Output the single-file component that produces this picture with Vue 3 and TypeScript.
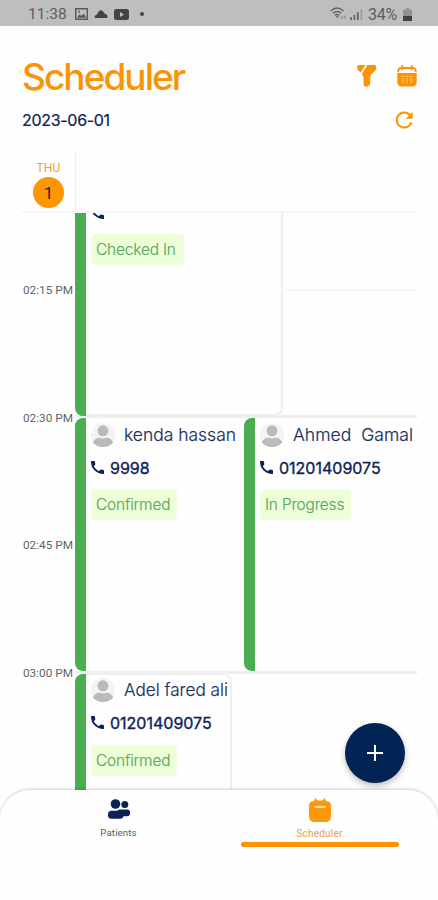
<script setup lang="ts">
interface Appointment {
  name: string
  phone: string
  status: string
  width: number
  badgeWidth: number
  nameWidth: number
  outlined: boolean
}

const times: string[] = ['02:15 PM', '02:30 PM', '02:45 PM', '03:00 PM']

const slots: Appointment[][] = [
  [{ name: '', phone: '', status: 'Checked In', width: 208, badgeWidth: 93, nameWidth: 0, outlined: true }],
  [
    { name: 'kenda hassan', phone: '9998', status: 'Confirmed', width: 169, badgeWidth: 86, nameWidth: 113, outlined: false },
    { name: 'Ahmed\u00a0 Gamal', phone: '01201409075', status: 'In Progress', width: 173, badgeWidth: 91, nameWidth: 121, outlined: false },
  ],
  [{ name: 'Adel fared ali', phone: '01201409075', status: 'Confirmed', width: 157, badgeWidth: 86, nameWidth: 105, outlined: true }],
]
</script>

<template>
  <div class="screen">
    <div class="status">
      <span class="clock">11:38</span>
      <svg class="st-img" viewBox="0 0 13 12"><rect x=".75" y=".75" width="11.5" height="10.5" fill="none" stroke="#555" stroke-width="1.4" /><path d="M2 9.7 4.6 6.3 6.5 8 8.6 5.5 11.2 9.7Z" fill="#555" /><circle cx="4" cy="3.7" r="1" fill="#555" /></svg>
      <svg class="st-cloud" viewBox="0 0 14 8"><path d="M1 8Q-.5 5.5 3 4.4Q5 0 7.5.4Q9.5.8 10.4 3.4Q14.6 4.5 13.2 8Z" fill="#444" /></svg>
      <svg class="st-tube" viewBox="0 0 15 11"><rect width="15" height="11" rx="2.5" fill="#444" /><path d="M6 3v5l4-2.5Z" fill="#bebebe" /></svg>
      <i class="st-dot" />
      <span class="grow" />
      <svg class="st-wifi" viewBox="0 0 17 14"><g fill="none" stroke="#666" stroke-width="1.4"><path d="M.8 4Q7 -1.8 13.6 4" /><path d="M3 6.2Q7.2 2.6 11.4 6.2" /><path d="M5 8.4Q7.2 6.6 9.4 8.4" /></g><path d="M5.6 9.2h3.2L7.2 11Z" fill="#555" /><path d="M12 9v3M14.8 8.6v3" stroke="#888" stroke-width="1.2" /></svg>
      <svg class="st-signal" viewBox="0 0 13 12"><path d="M1 12V9.3M4.4 12V7M7.8 12V4.2" stroke="#666" stroke-width="1.8" /><path d="M11.4 12V1" stroke="#999" stroke-width="1.6" /></svg>
      <span class="pct">34%</span>
      <svg class="st-bat" viewBox="0 0 9 13"><path d="M3 0h3v1.5h3V13H0V1.5h3Z" fill="#919191" /><path d="M0 8h9v5H0Z" fill="#3f3f3f" /></svg>
    </div>

    <header class="head">
      <div class="title-row">
        <h1>Scheduler</h1>
        <svg class="ic-filter" viewBox="0 0 20 22"><path d="M2 0H8.6L3.6 7.6 1 4.9Q.2 4 .2 2.8V1.7Q.2 0 2 0Z" fill="#fb9405" /><path d="M10.4 0h6.9Q19.3 0 19.3 1.9V3.2Q19.3 4.5 18.2 5.6L14.3 9.4Q13.2 10.6 13.2 12v6.4Q13.2 20 11.8 20.8L10 21.7Q6.8 22.3 6.6 19.6V13Q6.6 11.7 5.9 10.7L4.8 9.1Z" fill="#fb9405" /></svg>
        <svg class="ic-cal" viewBox="0 0 20 22"><path d="M.3 8.1H19.7V16.8Q19.7 21.6 15 21.6H5Q.3 21.6.3 16.8Z" fill="#fb9405" /><path d="M1.2 7V6.2Q1.2 3 4.6 3H15.4Q18.8 3 18.8 6.2V7" fill="none" stroke="#fb9405" stroke-width="1.8" /><path d="M5.3.7V4.5M14.7.7V4.5" stroke="#fb9405" stroke-width="1.8" stroke-linecap="round" /><path d="M4.2 11.3H7M8.8 11.3h2.5M13 11.3h2.5M6 13.2v4.5M10 13.2v4.5M14.2 13.2v4.5" stroke="#ffc470" stroke-width="1.2" /></svg>
      </div>
      <div class="date-row">
        <span class="date">2023-06-01</span>
        <svg class="ic-refresh" viewBox="0 0 18 18"><path d="M15.7 5.2A7.5 7.5 0 1 0 16.4 11.3" fill="none" stroke="#fb9405" stroke-width="2" /><path d="M17.6.8V7.7H10.8Z" fill="#fb9405" /></svg>
      </div>
    </header>

    <div class="day-row">
      <div class="day"><span class="dow">THU</span><span class="dom">1</span></div>
    </div>

    <main class="board">
      <div class="times"><svg v-for="t in times" :key="t" width="53" height="127.6"><text x="1" y="67.5" textLength="50" lengthAdjust="spacingAndGlyphs">{{ t }}</text></svg></div>
      <div class="slots">
        <section v-for="(slot, i) in slots" :key="i" class="slot">
          <div v-if="i === 0" class="half-line" />
          <article v-for="(a, j) in slot" :key="j" class="event" :class="{ outlined: a.outlined }" :style="{ width: a.width + 'px' }">
            <div class="bar" />
            <div class="body">
              <div class="who">
                <svg class="avatar" viewBox="0 0 24 24"><circle cx="12" cy="12" r="12" fill="#f3f3f3" /><circle cx="12" cy="7.8" r="5.5" fill="#b9babb" /><path d="M1.8 19.5Q4 14.8 8.5 14.8Q12 16.3 15.5 14.8Q20 14.8 22.2 19.5Q18 24 12 24T1.8 19.5Z" fill="#b9babb" /></svg>
                <svg v-if="a.name" class="name" :width="a.nameWidth" height="24"><text x="0" y="18" :textLength="a.nameWidth - 1" lengthAdjust="spacingAndGlyphs">{{ a.name }}</text></svg>
              </div>
              <div class="tel">
                <svg class="phone" viewBox="0 0 13 13"><path d="M.5 0H3.2Q3.8 0 3.9.6L4.3 3Q4.4 3.5 4 3.9L2.7 5.2Q4.5 8.5 7.8 10.2L9.1 8.9Q9.5 8.5 10 8.6L12.4 9Q13 9.1 13 9.7V12.4Q13 13 12.4 13Q7 13 3.4 9.3T0 .6Q0 0 .5 0Z" fill="#0a2354" /></svg>
                <span>{{ a.phone }}</span>
              </div>
              <div class="badge" :style="{ width: a.badgeWidth + 'px' }">{{ a.status }}</div>
            </div>
          </article>
        </section>
      </div>
    </main>

    <button class="fab" aria-label="Add"><svg viewBox="0 0 16 16"><path d="M8 0V16M0 8H16" stroke="#fff" stroke-width="2" /></svg></button>

    <nav class="tabs">
      <a class="tab">
        <svg class="ic-people" viewBox="0 0 22 20"><circle cx="7.5" cy="5" r="4.8" fill="#0a2354" /><circle cx="16.8" cy="5.5" r="3.5" fill="#0a2354" /><rect x="9" y="10.5" width="13" height="6.8" rx="3" fill="#0a2354" /><rect x="0" y="11.8" width="15.5" height="8" rx="3.5" fill="#0a2354" /></svg>
        <span>Patients</span>
      </a>
      <a class="tab active">
        <svg class="ic-sched" viewBox="0 0 22 24"><path d="M5 3 6.3 0 8.5 2.4h5L15.7 0 17 3Q22 3.2 22 8V18Q22 24 16 24H6Q0 24 0 18V8Q0 3.2 5 3Z" fill="#ff9707" /><path d="M6 8.8H16" stroke="#ffe3b8" stroke-width="1.8" stroke-linecap="round" /></svg>
        <span>Scheduler</span>
        <i class="underline" />
      </a>
    </nav>
  </div>
</template>

<style>
body { margin: 0; background: #fefefe; }
</style>

<style scoped>
.screen { position: relative; display: flex; flex-direction: column; width: 438px; height: 900px; overflow: hidden; background: #fefefe; font-family: Inter, "Liberation Sans", sans-serif; color: #0a2354; }
.screen * { box-sizing: border-box; }
svg { display: block; flex: none; }
.grow { flex: 1; }
.status { display: flex; align-items: center; height: 26px; padding: 2px 26px 0 28px; flex: none; background: #bebebe; color: #5d5d5d; font-family: Roboto, sans-serif; font-size: 15.5px; }
.clock { width: 47px; }
.st-img { width: 13px; height: 12px; }
.st-cloud { width: 14px; height: 8px; margin-left: 6px; }
.st-tube { width: 15px; height: 11px; margin-left: 6px; }
.st-dot { width: 4px; height: 4px; margin-left: 11px; border-radius: 50%; background: #444; }
.st-wifi { width: 17px; height: 14px; }
.st-signal { width: 13px; height: 12px; margin-left: 3px; }
.pct { width: 30px; margin-left: 5px; font-size: 16px; letter-spacing: -0.2px; }
.st-bat { width: 9px; height: 13px; margin-left: 5px; }

.head { flex: none; height: 124px; padding: 29px 21px 0 22px; }
.title-row { display: flex; align-items: center; height: 42px; }
h1 { flex: 1; margin: 0; padding-top: 2px; color: #fb9405; font-size: 37px; line-height: 42px; font-weight: 500; letter-spacing: -1.95px; }
.ic-filter { width: 20px; height: 22px; margin-right: 20px; }
.ic-cal { width: 20px; height: 22px; }
.date-row { display: flex; align-items: center; justify-content: space-between; height: 24px; margin-top: 11px; padding-right: 4px; }
.date { font-size: 16px; line-height: 20px; letter-spacing: -0.3px; -webkit-text-stroke: 0.2px #0a2354; }
.ic-refresh { width: 18px; height: 18px; }

.day-row { flex: none; height: 63px; margin: 0 22px; border-bottom: 2px solid #f5f5f5; }
.day { display: flex; flex-direction: column; align-items: center; width: 54px; height: 61px; padding-top: 10px; border-right: 1px solid #f0f0f0; font-family: Roboto, sans-serif; }
.dow { color: #e9a23b; font-size: 12px; line-height: 16px; letter-spacing: 0.2px; }
.dom { display: flex; align-items: center; justify-content: center; width: 31px; height: 31px; margin-top: 1px; border-radius: 50%; background: #ff9600; color: #2f2008; font-size: 17px; }

.board { display: flex; flex: none; height: 577px; padding: 0 21px 0 22px; overflow: hidden; }
.times { display: flex; flex-direction: column; width: 53px; padding-top: 13px; }
.times text { fill: #636363; font-family: Roboto, sans-serif; font-size: 11.3px; }
.slots { width: 342px; margin-top: -50px; }
.slot { position: relative; display: flex; height: 255.4px; border-bottom: 3px solid #efefef; }
.half-line { position: absolute; left: 206px; right: 0; top: 126px; height: 2px; background: #f7f7f7; }
.event { display: flex; flex: none; height: 254px; }
.event.outlined { height: 253px; border: 2px solid #eee; border-width: 0 2px 2px 0; border-radius: 8px; }
.slot:last-child .event { border-top-width: 1px; }
.bar { flex: none; width: 11px; height: 253px; border-radius: 8px 0 0 8px; background: #4aae51; }
.slot:last-child .bar { margin-top: -1px; }
.slot:first-child .bar { border-radius: 0 0 0 8px; }
.body { flex: 1; min-width: 0; padding: 4px 0 0 5px; }
.slot:last-child .body { padding-top: 3px; }
.who { display: flex; align-items: center; height: 25px; }
.avatar { width: 24px; height: 24px; }
.name { margin-left: 9px; overflow: visible; }
.name text { fill: #203058; font-size: 17.5px; font-weight: 300; stroke: #203058; stroke-width: 0.2px; }
.tel { display: flex; align-items: center; height: 24px; margin-top: 8px; font-size: 16px; letter-spacing: 0; -webkit-text-stroke: 0.35px #0a2354; }
.tel span { margin-left: 6px; padding-top: 1px; }
.phone { width: 13px; height: 13px; }
.slot:first-child .phone { margin-top: 1px; }
.badge { height: 31px; margin-top: 10px; padding-left: 5px; border-radius: 4px; background: #edffd8; color: #58a663; font-size: 15.5px; line-height: 31px; font-weight: 300; letter-spacing: -0.2px; white-space: nowrap; -webkit-text-stroke: 0.15px #58a663; }

.fab { position: absolute; left: 345px; top: 723px; display: flex; align-items: center; justify-content: center; width: 60px; height: 60px; padding: 0; border: 0; border-radius: 50%; background: #022454; box-shadow: 0 3px 6px rgba(0, 0, 0, 0.25); }
.fab svg { width: 16px; height: 16px; }
.tabs { position: relative; display: flex; flex: none; height: 111px; padding: 0 18px; border-radius: 30px 30px 0 0; background: #fefefe; box-shadow: 0 -1px 3px rgba(0, 0, 0, 0.18); }
.tab { display: flex; flex-direction: column; align-items: center; width: 201px; color: #4d6173; font-family: Roboto, sans-serif; font-size: 9.7px; line-height: 12px; letter-spacing: 0.1px; }
.tab span { margin-top: 8px; }
.ic-people { width: 22px; height: 20px; margin-top: 9px; }
.active { color: #e8a23e; font-size: 10px; letter-spacing: 0.2px; }
.ic-sched { width: 22px; height: 24px; margin-top: 8px; }
.tab.active span { margin-top: 6px; }
.underline { width: 158px; height: 5px; margin-top: 2px; border-radius: 3px; background: #fb9405; }
</style>
